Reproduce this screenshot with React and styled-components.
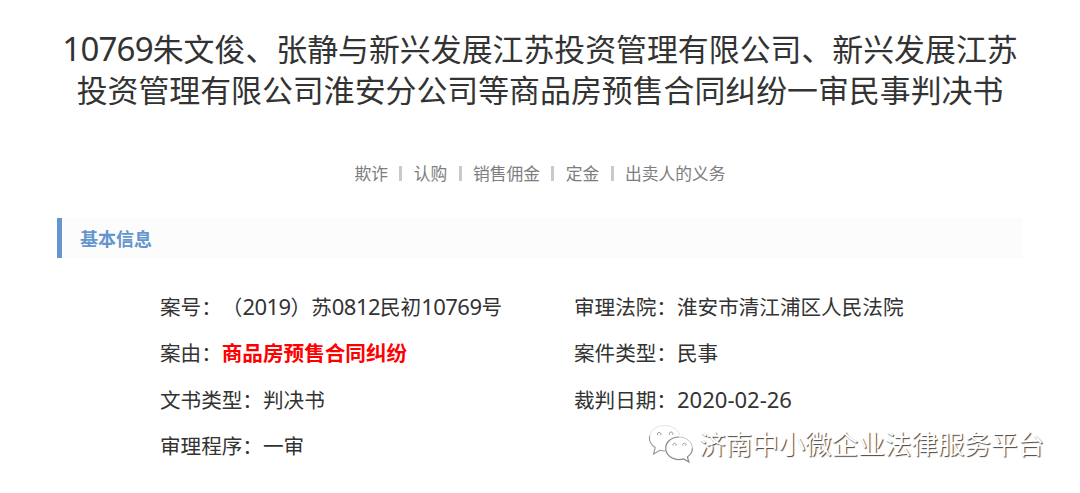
import styled, { createGlobalStyle } from 'styled-components'

const tags = ['欺诈', '认购', '销售佣金', '定金', '出卖人的义务']

const leftInfo = [
    { label: '案号：', value: '（2019）苏0812民初10769号' },
    { label: '案由：', value: '商品房预售合同纠纷', hot: true },
    { label: '文书类型：', value: '判决书' },
    { label: '审理程序：', value: '一审' },
]

const rightInfo = [
    { label: '审理法院：', value: '淮安市清江浦区人民法院' },
    { label: '案件类型：', value: '民事' },
    { label: '裁判日期：', value: '2020-02-26' },
]

// numbers are set a bit larger and tighter than the chinese text
function Mixed({ text }){
    return text.split(/([\d-]+)/).map((part, i) => (
        i % 2 ? <Num key={i} $date={part.includes('-')}>{part}</Num> : part
    ))
}

function InfoList({ items }){
    return(
        <Column>
            {items.map((item) => (
                <Row key={item.label}>
                    {item.label}
                    <Value $hot={item.hot}><Mixed text={item.value} /></Value>
                </Row>
            ))}
        </Column>
    )
}

function App(){
    return(
        <Page>
            <GlobalStyle />
            <Title>
                <TitleLine><Mixed text="10769朱文俊、张静与新兴发展江苏投资管理有限公司、新兴发展江苏" /></TitleLine>
                <TitleLine>投资管理有限公司淮安分公司等商品房预售合同纠纷一审民事判决书</TitleLine>
            </Title>

            <Tags>
                {tags.map((tag) => <Tag key={tag}>{tag}</Tag>)}
            </Tags>

            <SectionHead>基本信息</SectionHead>

            <Info>
                <InfoList items={leftInfo} />
                <InfoList items={rightInfo} />
            </Info>

            <Watermark>
                <WechatIcon viewBox="0 0 46 40">
                    <path d="M17 1.500C8.300 1.500 1.500 7 1.500 14c0 4 2.200 7.300 5.700 9.500L5.500 30l6.300-3.700c1.800.5 3.400.7 5.200.7l14.500-14.500C30.500 6 24.500 1.500 17 1.500z" fill="#fff" />
                    <path d="M1.700 11.500c-1 5 1.300 9.300 5.500 12L5.500 30l6.300-3.700c1.800.5 3.400.7 5.200.7" fill="none" stroke="#999" strokeWidth="1.1" />
                    <path d="M1.700 11.500C3 5.500 9.300 1.500 17 1.500c7.300 0 13 4 14.700 9.500" fill="none" stroke="#e2e2e2" strokeWidth="1" />
                    <path d="M31 13c-7.400 0-13.300 5-13.300 11.300S23.600 35.600 31 35.600c1.700 0 3.300-.2 4.700-.7l5.200 3.100-1.500-5.100c3-2 5-5.100 5-8.600C44.400 18 38.400 13 31 13z" fill="#fff" />
                    <path d="M31 13c7.400 0 13.400 5 13.400 11.300" fill="none" stroke="#c4c4c4" strokeWidth="1" />
                    <path d="M31 13c-7.400 0-13.300 5-13.300 11.300S23.600 35.600 31 35.600c1.700 0 3.300-.2 4.700-.7l5.200 3.100-1.500-5.100c3-2 5-5.100 5-8.600" fill="none" stroke="#8a8a8a" strokeWidth="1.200" />
                    <path d="M9.700 11.200a1.800 1.800 0 1 1 3 0M21.600 10.800a1.800 1.800 0 1 1 3 0M25.200 21.700a1.600 1.600 0 1 1 2.700 0M35 21.700a1.600 1.600 0 1 1 2.700 0" fill="none" stroke="#999" strokeWidth="1" />
                </WechatIcon>
                <WatermarkText>济南中小微企业法律服务平台</WatermarkText>
            </Watermark>
        </Page>
    )
}

const GlobalStyle = createGlobalStyle`
body{
    margin:0;
    background-color:#fff;
}
`

const Page = styled.div`
    position:relative;
    box-sizing:border-box;
    width:1080px;
    height:493px;
    padding:29px 57px 0;
    overflow:hidden;
    background-color:#fff;
    color:#333;
    font-family:"Noto Sans", "Noto Sans CJK SC", sans-serif;
    text-spacing-trim:space-all;
`

const Title = styled.h1`
    margin:0;
    font-size:30.9px;
    font-weight:400;
    line-height:41px;
    text-align:center;
`

const TitleLine = styled.span`
    display:block;
    white-space:nowrap;
`

const Num = styled.span`
    font-size:1.07em;
    line-height:1;
    letter-spacing:${(props) => (props.$date ? '0' : '-0.025em')};
`

const Tags = styled.div`
    display:flex;
    justify-content:center;
    margin-top:51px;
    color:#7e7e7e;
    font-size:16.75px;
    line-height:24px;
`

const Tag = styled.span`
    display:flex;
    align-items:center;
    & + &::before{
        content:'';
        width:3px;
        height:15px;
        margin:0 11.4px 2px;
        background-color:#c9c9c9;
    }
`

const SectionHead = styled.h2`
    box-sizing:border-box;
    width:966px;
    height:40px;
    margin:32px 0 0;
    padding-left:18px;
    border-left:5px solid #6595cd;
    background-color:#fcfcfc;
    color:#6595cd;
    font-size:18px;
    font-weight:700;
    line-height:42px;
`

const Info = styled.div`
    display:grid;
    grid-template-columns:414px 1fr;
    margin-top:26px;
    padding-left:103px;
`

const Column = styled.div`
    display:flex;
    flex-direction:column;
`

const Row = styled.div`
    height:46.3px;
    font-size:20.6px;
    line-height:46.3px;
    white-space:nowrap;
`

const Value = styled.span`
    color:${(props) => (props.$hot ? '#ff0000' : 'inherit')};
    font-weight:${(props) => (props.$hot ? 700 : 400)};
`

// sits over the bottom right corner of the page
const Watermark = styled.div`
    position:absolute;
    right:36px;
    bottom:29px;
    display:flex;
    align-items:center;
`

const WechatIcon = styled.svg`
    width:46px;
    height:40px;
    margin-right:5px;
`

const WatermarkText = styled.span`
    color:#fff;
    font-size:26.55px;
    line-height:38px;
    text-shadow:1px 1px 1px #444;
    white-space:nowrap;
`

export default App
